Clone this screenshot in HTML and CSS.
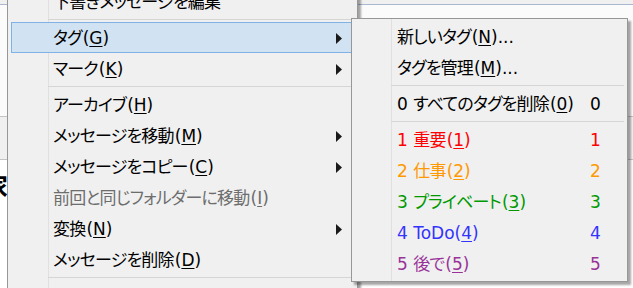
FILE: index.html
```html
<!DOCTYPE html>
<html lang="ja">
<head>
    <meta charset="UTF-8">
    <title>タグ メニュー</title>
    <link rel="stylesheet" href="styles.css">
</head>
<body>
    <div class="backdrop">
        <div class="bar-top"></div>
        <div class="pane pane-list"></div>
        <div class="pane pane-head"></div>
        <div class="pane pane-body"><span class="glyph">家</span></div>
    </div>

    <div class="menu main-menu">
        <div class="item"><span class="label"><span class="ja">下書きメッセージを編集</span></span></div>
        <div class="sep"></div>
        <div class="item active"><span class="label"><span class="ja">タグ</span>(<u>G</u>)</span><svg class="arrow" width="6" height="11" viewBox="0 0 6 11"><polygon points="0,0 6,5.5 0,11"/></svg></div>
        <div class="item"><span class="label"><span class="ja">マーク</span>(<u>K</u>)</span><svg class="arrow" width="6" height="11" viewBox="0 0 6 11"><polygon points="0,0 6,5.5 0,11"/></svg></div>
        <div class="sep"></div>
        <div class="item"><span class="label"><span class="ja">アーカイブ</span>(<u>H</u>)</span></div>
        <div class="item"><span class="label"><span class="ja">メッセージを移動</span>(<u>M</u>)</span><svg class="arrow" width="6" height="11" viewBox="0 0 6 11"><polygon points="0,0 6,5.5 0,11"/></svg></div>
        <div class="item"><span class="label"><span class="ja">メッセージをコピー</span>(<u>C</u>)</span><svg class="arrow" width="6" height="11" viewBox="0 0 6 11"><polygon points="0,0 6,5.5 0,11"/></svg></div>
        <div class="item disabled"><span class="label"><span class="ja">前回と同じフォルダーに移動</span>(<u>I</u>)</span></div>
        <div class="item"><span class="label"><span class="ja">変換</span>(<u>N</u>)</span><svg class="arrow" width="6" height="11" viewBox="0 0 6 11"><polygon points="0,0 6,5.5 0,11"/></svg></div>
        <div class="item"><span class="label"><span class="ja">メッセージを削除</span>(<u>D</u>)</span></div>
        <div class="sep"></div>
    </div>

    <div class="menu sub-menu">
        <div class="item"><span class="label"><span class="ja">新しいタグ</span>(<u>N</u>)...</span></div>
        <div class="item"><span class="label"><span class="ja">タグを管理</span>(<u>M</u>)...</span></div>
        <div class="sep"></div>
        <div class="item"><span class="label">0 <span class="ja">すべてのタグを削除</span>(<u>0</u>)</span><span class="key">0</span></div>
        <div class="sep"></div>
        <div class="item tag-red"><span class="label">1 <span class="ja">重要</span>(<u>1</u>)</span><span class="key">1</span></div>
        <div class="item tag-orange"><span class="label">2 <span class="ja">仕事</span>(<u>2</u>)</span><span class="key">2</span></div>
        <div class="item tag-green"><span class="label">3 <span class="ja">プライベート</span>(<u>3</u>)</span><span class="key">3</span></div>
        <div class="item tag-blue"><span class="label">4 ToDo(<u>4</u>)</span><span class="key">4</span></div>
        <div class="item tag-purple"><span class="label">5 <span class="ja">後で</span>(<u>5</u>)</span><span class="key">5</span></div>
    </div>
</body>
</html>
```

FILE: styles.css
```css
body {
    margin: 0;
    width: 633px;
    height: 288px;
    overflow: hidden;
    position: relative;
    font-family: "DejaVu Sans", "Noto Sans CJK JP", sans-serif;
    font-size: 17px;
    font-feature-settings: "palt";
    color: #000;
    background-color: #fbfbfb;
}

.backdrop {
    height: 288px;
}

.bar-top {
    height: 4px;
    background-color: #f0f0f0;
    border-bottom: 1px solid #a8b8cf;
}

.pane-list {
    height: 111px;
    background-color: #fbfbfb;
    border-bottom: 1px solid #c4c4c4;
}

.pane-head {
    height: 42px;
    background-color: #f0f0f0;
    border-bottom: 1px solid #c4c4c4;
}

.pane-body {
    height: 130px;
    background-color: #fff;
    padding-top: 10px;
}

.glyph {
    display: inline-block;
    margin-left: -17px;
    font-family: "Noto Sans CJK JP", sans-serif;
    font-size: 25px;
    font-weight: bold;
    line-height: 30px;
}

.menu {
    position: absolute;
    box-sizing: border-box;
    padding: 2px 0;
    border: 1px solid #979797;
    box-shadow: 3px 3px 2px rgba(0, 0, 0, 0.35);
}

.main-menu {
    left: 7px;
    top: -17px;
    width: 351px;
    padding-bottom: 40px;
    background: linear-gradient(to right, transparent 40px, #e0e0e0 40px, #e0e0e0 41px, transparent 41px), #f0f0f0;
}

.sub-menu {
    left: 351px;
    top: 18px;
    width: 277px;
    height: 264px;
    background: linear-gradient(to right, transparent 39px, #e0e0e0 39px, #e0e0e0 40px, transparent 40px), #f0f0f0;
}

.item {
    display: flex;
    align-items: center;
    box-sizing: border-box;
    height: 31px;
    margin: 0 3px;
    padding: 2px 0 0 41px;
    border: 1px solid transparent;
    line-height: 27px;
    white-space: nowrap;
}

.ja {
    letter-spacing: -0.8px;
    margin-right: 1px;
}

.item u {
    text-underline-offset: 2px;
}

.item.active {
    background-color: #d1e2f2;
    border-color: #7fb3e7;
}

.item.disabled {
    color: #6d6d6d;
}

.arrow {
    margin-left: auto;
    margin-right: 11px;
    fill: #1a1a1a;
}

.key {
    margin-left: auto;
    width: 20px;
    margin-right: 13px;
}

.sep {
    height: 1px;
    margin: 2px 3px 2px 40px;
    background-color: #d5d5d5;
}

.sub-menu .sep {
    margin-left: 39px;
}

.tag-red { color: #ff0000; }
.tag-orange { color: #ff9900; }
.tag-green { color: #009900; }
.tag-blue { color: #3333ff; }
.tag-purple { color: #993399; }
```
